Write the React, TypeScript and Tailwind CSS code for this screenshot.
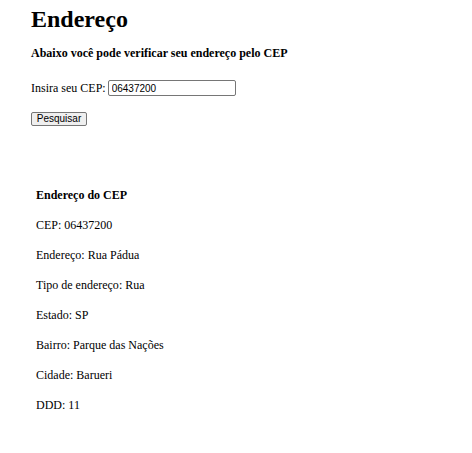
import React from 'react';

const resultado = [
  { label: 'CEP', value: '06437200' },
  { label: 'Endereço', value: 'Rua Pádua' },
  { label: 'Tipo de endereço', value: 'Rua' },
  { label: 'Estado', value: 'SP' },
  { label: 'Bairro', value: 'Parque das Nações' },
  { label: 'Cidade', value: 'Barueri' },
  { label: 'DDD', value: '11' },
];

export default function App() {
  return (
    <div className="min-h-screen bg-white pl-[31px] text-black font-['Liberation_Serif',serif]">
      <h1 className="pt-[5px] text-[24px] leading-[28px] font-bold">Endereço</h1>
      <h4 className="mt-[13px] text-[12px] leading-[14px] font-bold">
        Abaixo você pode verificar seu endereço pelo CEP
      </h4>

      {/* Formulário */}
      <div className="mt-[20px] flex h-[16px] items-center gap-[2px]">
        <label className="text-[12px] leading-[16px]">Insira seu CEP:</label>
        <input
          defaultValue="06437200"
          className="h-[16px] w-[128px] rounded-[2px] border border-[#767676] bg-white pl-[3px] text-[10px] leading-[14px] text-black outline-none font-['Liberation_Sans',Arial,sans-serif]"
        />
      </div>
      <button className="mt-[16px] flex h-[14px] w-[56px] items-center justify-center rounded-[2px] border border-[#767676] bg-[#efefef] text-[10px] leading-[12px] text-black font-['Liberation_Sans',Arial,sans-serif]">
        Pesquisar
      </button>

      {/* Resultado */}
      <div className="mt-[62px] flex flex-col gap-[16px] pl-[5px] text-[12px] leading-[14px]">
        <p className="font-bold">Endereço do CEP</p>
        {resultado.map((item) => (
          <p key={item.label}>
            {item.label}: {item.value}
          </p>
        ))}
      </div>
    </div>
  );
}
